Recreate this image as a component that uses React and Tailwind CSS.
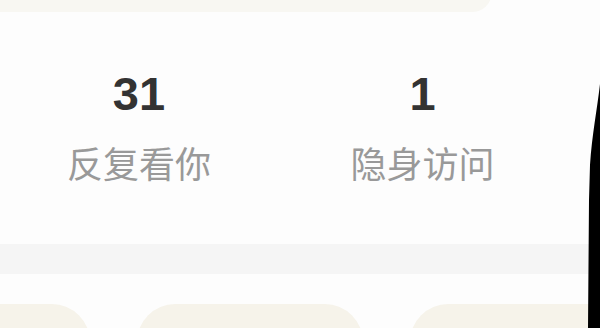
import React from 'react'

const stats = [
  { value: '31', label: '反复看你', width: 'w-[278px]' },
  { value: '1', label: '隐身访问', width: 'w-[289px]' },
]

const cards = [0, 1, 2]

export default function App() {
  return (
    <div className="relative w-[600px] h-[328px] overflow-hidden bg-[#fdfdfd]" style={{ fontFamily: '"Liberation Sans", "Noto Sans CJK SC", sans-serif' }}>
      {/* top card edge */}
      <div className="w-[492px] h-[40px] mt-[-28px] rounded-br-[20px] bg-[#f8f7f2]" />

      {/* visitor stats */}
      <div className="flex h-[232px] pt-[58px]">
        {stats.map((s) => (
          <div key={s.label} className={`${s.width} flex flex-col items-center`}>
            <div className="text-[47px] leading-none font-bold text-[#333333]">{s.value}</div>
            <div className="mt-[27px] text-[36px] leading-none text-[#999999]" style={{ fontFamily: '"Noto Sans CJK SC", sans-serif' }}>
              {s.label}
            </div>
          </div>
        ))}
      </div>

      {/* divider band */}
      <div className="h-[30px] bg-[#f5f5f5]" />

      {/* cards row, scrolled */}
      <div className="flex gap-[47px] ml-[-136px] mt-[30px]">
        {cards.map((c) => (
          <div key={c} className="w-[226px] h-[100px] shrink-0 rounded-[38px] bg-[#f6f3ea]" />
        ))}
      </div>

      {/* device edge */}
      <svg className="absolute right-0 top-0" width="14" height="328" viewBox="586 0 14 328">
        <path d="M600 84 C597 110 592 135 590 165 L589 200 L588 328 L600 328 Z" fill="#000" />
      </svg>
    </div>
  )
}
